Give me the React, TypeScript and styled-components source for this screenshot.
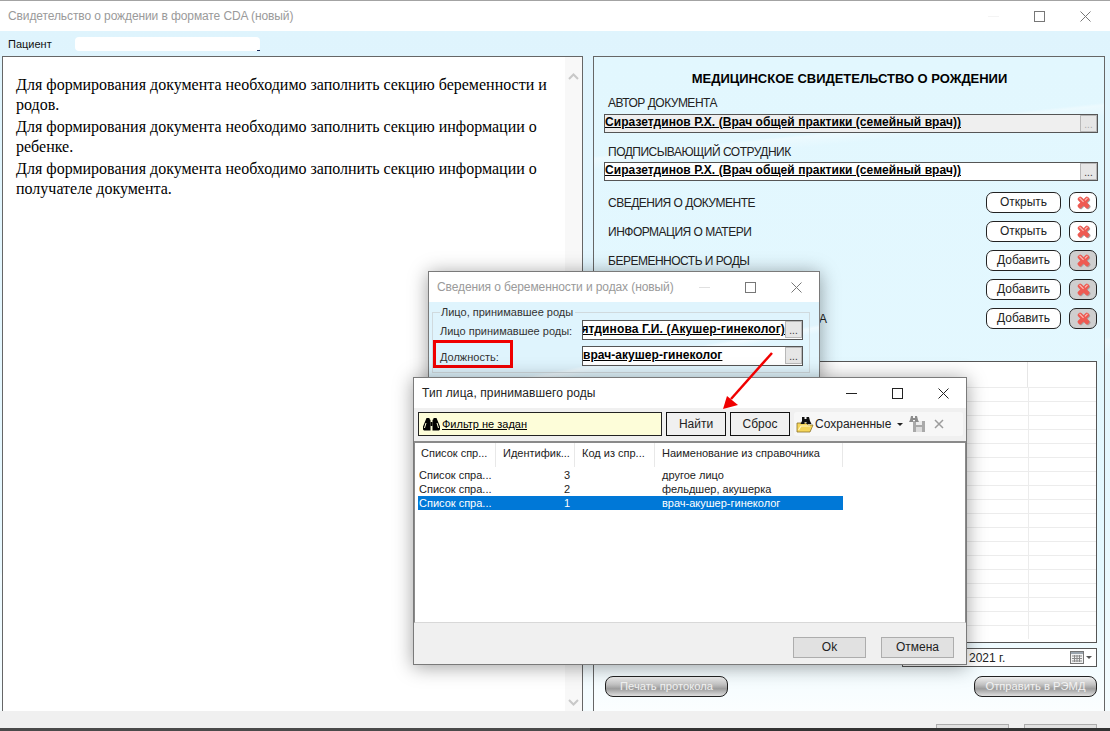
import styled, { createGlobalStyle } from "styled-components";

const GlobalStyle = createGlobalStyle`
  html, body {
    margin: 0;
    padding: 0;
    background: #ffffff;
  }
  * {
    box-sizing: border-box;
  }
`;

const Page = styled.div`
  position: relative;
  width: 1110px;
  height: 731px;
  overflow: hidden;
  display: flex;
  flex-direction: column;
  font-family: "Liberation Sans", Arial, sans-serif;
  font-size: 12px;
  color: #111;
  border-top: 1px solid #a3a3a3;
`;

const TitleBar = styled.div<{ $right?: number }>`
  flex: none;
  height: 30px;
  padding: 0 ${(p) => p.$right ?? 0}px 0 8px;
  background: #ffffff;
  display: flex;
  align-items: center;
  justify-content: space-between;
`;

const TitleText = styled.span<{ $active?: boolean }>`
  color: ${(p) => (p.$active ? "#222" : "#9a9a9a")};
  font-size: 12px;
  letter-spacing: ${(p) => (p.$active ? 0.1 : -0.1)}px;
  white-space: nowrap;
`;

const WinControls = styled.div`
  flex: none;
  display: flex;
  height: 100%;
`;

const WinControl = styled.div`
  width: 46px;
  height: 100%;
  display: flex;
  align-items: center;
  justify-content: center;
`;

const Workspace = styled.div`
  flex: 1;
  min-height: 0;
  display: flex;
  flex-direction: column;
  background:
    linear-gradient(168deg, transparent 0 58%, rgba(255, 255, 255, 0.4) 58.4%, transparent 60%),
    linear-gradient(180deg, #dff4fd 0%, #e6f8ff 70%, #f7fdff 100%);
`;

const PatientRow = styled.div`
  flex: none;
  height: 25px;
  padding-left: 8px;
  display: flex;
  align-items: center;
  font-size: 11px;
  color: #111;
`;

const PatientName = styled.div`
  width: 185px;
  height: 14px;
  margin-left: 23px;
  background: #ffffff;
  border-radius: 4px;
`;

const PatientTail = styled.div`
  width: 3px;
  height: 1px;
  margin: 14px 0 0 -3px;
  background: #1a2a5a;
`;

const Panels = styled.div`
  flex: 1;
  min-height: 0;
  display: flex;
  gap: 10px;
  padding: 0 5px 0 2px;
`;

const LeftPanel = styled.div`
  width: 581px;
  display: flex;
  background: #ffffff;
  border: 1px solid #666;
  border-bottom: none;
`;

const Message = styled.div`
  flex: 1;
  padding: 18px 14px 0 13px;
  font-family: "Liberation Serif", "Times New Roman", serif;
  font-size: 16px;
  line-height: 20px;
  color: #000;
`;

const MessageLine = styled.p`
  margin: 0 0 2px;
`;

const Scrollbar = styled.div`
  flex: none;
  width: 17px;
  background: #f8f8f8;
  display: flex;
  flex-direction: column;
  justify-content: space-between;
  align-items: center;
  padding: 16px 0 5px;
`;

const RightPanel = styled.div`
  flex: 1;
  display: flex;
  flex-direction: column;
  padding: 0 6px 0 10px;
  border: 1px solid #666;
  border-bottom: none;
  background:
    linear-gradient(174deg, transparent 0 14%, rgba(255, 255, 255, 0.35) 14.4%, transparent 16%),
    linear-gradient(180deg, #e2f7fe 0%, #e4f8ff 80%, #fbfeff 100%);
`;

const DocTitle = styled.div`
  margin-top: 14px;
  text-align: center;
  font-size: 13px;
  line-height: 16px;
  font-weight: bold;
  letter-spacing: -0.03px;
  color: #000;
  padding-right: 3px;
`;

const SectionLabel = styled.div<{ $top: number }>`
  margin-top: ${(p) => p.$top}px;
  padding-left: 4px;
  font-size: 12px;
  letter-spacing: -0.5px;
  line-height: 14px;
  color: #222;
`;

const Field = styled.div<{ $muted?: boolean; $top?: number }>`
  height: 19px;
  margin-top: ${(p) => p.$top ?? 2}px;
  display: flex;
  justify-content: space-between;
  background: ${(p) => (p.$muted ? "#efefef" : "#ffffff")};
  border: 1px solid #555;
  overflow: hidden;
`;

const FieldValue = styled.span<{ $wide?: boolean }>`
  margin-top: 1px;
  font-size: 12px;
  letter-spacing: ${(p) => (p.$wide ? 0.12 : 0.05)}px;
  line-height: 13px;
  font-weight: bold;
  color: #000;
  text-decoration: underline;
  white-space: nowrap;
`;

const DotsButton = styled.div<{ $muted?: boolean }>`
  flex: none;
  width: 17px;
  height: 17px;
  background: #e6e6e6;
  border: 1px solid #b8b8b8;
  color: ${(p) => (p.$muted ? "#aaa" : "#333")};
  font-size: 10px;
  line-height: 17px;
  text-align: center;
`;

const SectionRows = styled.div`
  margin: 11px 1px 0 0;
  display: flex;
  flex-direction: column;
  gap: 8px;
`;

const SectionRow = styled.div`
  height: 21px;
  display: flex;
  align-items: center;
  gap: 8px;
`;

const RowLabel = styled.span`
  flex: 1;
  padding-left: 4px;
  font-size: 12px;
  letter-spacing: -0.5px;
  color: #222;
`;

const RoundButton = styled.div`
  width: 75px;
  height: 21px;
  background: #ffffff;
  border: 1px solid #222;
  border-radius: 7px;
  font-size: 12px;
  line-height: 19px;
  text-align: center;
  color: #222;
`;

const DeleteButton = styled.div<{ $disabled?: boolean }>`
  width: 28px;
  height: 21px;
  background: ${(p) => (p.$disabled ? "#cfcfcf" : "#ffffff")};
  border: 1px solid #222;
  border-radius: 7px;
  display: flex;
  align-items: center;
  justify-content: center;
`;

const DataTable = styled.div`
  margin: 32px 1px 0 0;
  height: 282px;
  background: #ffffff;
  border: 1px solid #555;
  overflow: hidden;
`;

const TableHeader = styled.div`
  height: 25px;
  display: grid;
  grid-template-columns: 1fr 68px;
`;

const TableHeaderCell = styled.div`
  border-right: 1px solid #e6e6e6;
  &:last-child {
    border-right: none;
  }
`;

const TableRow = styled.div`
  height: 14px;
  display: grid;
  grid-template-columns: 1fr 67px;
  border-top: 1px solid #ececec;
`;

const TableCell = styled.div`
  border-right: 1px solid #ececec;
  &:last-child {
    border-right: none;
  }
`;

const DateRow = styled.div`
  margin: 5px 1px 0 0;
  display: flex;
  justify-content: flex-end;
`;

const DateField = styled.div`
  width: 195px;
  height: 19px;
  padding: 0 4px 0 66px;
  background: #ffffff;
  border: 1px solid #555;
  display: flex;
  align-items: center;
  justify-content: space-between;
  font-size: 12px;
  color: #222;
`;

const DateIcons = styled.div`
  display: flex;
  align-items: center;
`;

const ActionRow = styled.div`
  margin: 9px 1px 0 0;
  display: flex;
  justify-content: space-between;
  padding-left: 1px;
`;

const GlossyButton = styled.div`
  width: 123px;
  height: 21px;
  border: 1px solid #222;
  border-radius: 8px;
  background: linear-gradient(180deg, #efefef 0%, #c2c2c2 40%, #9c9c9c 62%, #dedede 100%);
  color: #f2f2f2;
  font-size: 11.2px;
  line-height: 19px;
  text-align: center;
`;

const FooterBar = styled.div`
  flex: none;
  height: 17px;
  padding: 13px 13px 0 0;
  background: #f0f0f0;
  display: flex;
  justify-content: flex-end;
  gap: 15px;
  overflow: hidden;
`;

const FooterButton = styled.div`
  width: 73px;
  height: 21px;
  background: #e1e1e1;
  border: 1px solid #adadad;
`;

const TaskBar = styled.div`
  flex: none;
  height: 3px;
  background: linear-gradient(90deg, #4a4a4a 0 590px, #333 590px);
`;

const Dialog = styled.div<{ $x: number; $y: number; $w: number; $h: number }>`
  position: absolute;
  left: ${(p) => p.$x}px;
  top: ${(p) => p.$y}px;
  width: ${(p) => p.$w}px;
  height: ${(p) => p.$h}px;
  display: flex;
  flex-direction: column;
  background: #f0f0f0;
  border: 1px solid #7a7a7a;
  box-shadow: 0 2px 18px rgba(0, 0, 0, 0.38);
`;

const BirthBody = styled.div`
  flex: 1;
  padding: 4px 9px 0 3px;
  background: linear-gradient(170deg, #dff4fd 0 60%, #eefaff 62%, #e2f6fe 66%);
`;

const GroupBox = styled.fieldset`
  margin: 0;
  height: 67px;
  padding: 1px 6px 0 7px;
  border: 1px solid #d0dade;
  display: flex;
  flex-direction: column;
  gap: 6px;
`;

const GroupLegend = styled.legend`
  padding: 0 2px 0 1px;
  margin-left: 0;
  font-size: 11px;
  line-height: 13px;
  color: #333;
`;

const GroupRow = styled.div`
  height: 20px;
  display: flex;
  align-items: center;
  justify-content: space-between;
`;

const GroupLabel = styled.span`
  padding-top: 1px;
  font-size: 11px;
  color: #333;
  white-space: nowrap;
`;

const ClipField = styled.div`
  flex: none;
  width: 221px;
  height: 20px;
  display: flex;
  background: #ffffff;
  border: 1px solid #555;
  overflow: hidden;
`;

const ClipValue = styled.div<{ $end?: boolean }>`
  flex: 1;
  min-width: 0;
  overflow: hidden;
  display: flex;
  padding-top: 1px;
  justify-content: ${(p) => (p.$end ? "flex-end" : "flex-start")};
`;

const HighlightBox = styled.div`
  position: absolute;
  left: 4px;
  top: 68px;
  width: 80px;
  height: 28px;
  border: 3px solid #f00000;
`;

const Toolbar = styled.div`
  flex: none;
  height: 33px;
  padding: 4px 3px 0 4px;
  display: flex;
  gap: 4px;
`;

const FilterBox = styled.div`
  width: 244px;
  height: 24px;
  padding-left: 4px;
  background: #fdfdd9;
  border: 1px solid #222;
  display: flex;
  align-items: center;
  gap: 2px;
  font-size: 11px;
`;

const FilterLink = styled.span`
  color: #000;
  text-decoration: underline;
`;

const FlatButton = styled.div`
  width: 60px;
  height: 24px;
  background: #f0f0f0;
  border: 1px solid #111;
  font-size: 12px;
  line-height: 22px;
  text-align: center;
  color: #222;
`;

const SavedBar = styled.div`
  flex: 1;
  height: 24px;
  padding-left: 2px;
  background: #f7f7f7;
  border-radius: 3px;
  display: flex;
  align-items: center;
  font-size: 12px;
  color: #222;
`;

const SavedLabel = styled.span`
  margin: 0 0 0 1px;
`;

const SaveSlot = styled.span`
  display: flex;
  margin-left: 6px;
`;

const ClearSlot = styled.span`
  display: flex;
  margin-left: 8px;
`;

const Caret = styled.span<{ $ml: number; $color?: string }>`
  width: 0;
  height: 0;
  margin-left: ${(p) => p.$ml}px;
  border-left: 3px solid transparent;
  border-right: 3px solid transparent;
  border-top: 3px solid ${(p) => p.$color ?? "#222"};
`;

const Grid = styled.div`
  flex: none;
  height: 182px;
  padding-left: 3px;
  background: #ffffff;
  border-top: 2px solid #8a8a8a;
  border-left: 1px solid #8a8a8a;
  border-right: 1px solid #8a8a8a;
  border-bottom: 1px solid #d8d8d8;
`;

const GridHeader = styled.div`
  width: 425px;
  height: 24px;
  display: grid;
  grid-template-columns: 78px 79px 80px 188px;
  margin-bottom: 1px;
`;

const GridHeadCell = styled.div<{ $first?: boolean }>`
  padding: 4px 0 0 ${(p) => (p.$first ? 3 : 7)}px;
  border-right: 1px solid #e8e8e8;
  font-size: 11px;
  color: #222;
  white-space: nowrap;
`;

const GridRow = styled.div<{ $selected?: boolean }>`
  width: 425px;
  height: 14px;
  display: grid;
  grid-template-columns: 78px 79px 80px 188px;
  background: ${(p) => (p.$selected ? "#0078d7" : "transparent")};
  color: ${(p) => (p.$selected ? "#ffffff" : "#222")};
  font-size: 11px;
  line-height: 14px;
`;

const GridCell = styled.div<{ $pad?: number; $right?: boolean }>`
  padding: ${(p) => (p.$right ? "0 5px 0 0" : `0 0 0 ${p.$pad ?? 1}px`)};
  text-align: ${(p) => (p.$right ? "right" : "left")};
  white-space: nowrap;
  overflow: hidden;
`;

const DialogFooter = styled.div`
  flex: 1;
  padding: 14px 12px 0 0;
  display: flex;
  justify-content: flex-end;
  gap: 15px;
`;

const DialogButton = styled.div`
  width: 73px;
  height: 21px;
  background: #e1e1e1;
  border: 1px solid #adadad;
  font-size: 12px;
  line-height: 19px;
  text-align: center;
  color: #222;
`;

const ArrowOverlay = styled.svg`
  position: absolute;
  left: 715px;
  top: 345px;
  overflow: visible;
`;

const Minimize = ({ color }: { color: string }) => (
  <svg width="11" height="11" viewBox="0 0 11 11">
    <path d="M0 5.500h11" stroke={color} strokeWidth="1" />
  </svg>
);

const Maximize = ({ color }: { color: string }) => (
  <svg width="11" height="11" viewBox="0 0 11 11">
    <rect x="0.5" y="0.5" width="10" height="10" fill="none" stroke={color} />
  </svg>
);

const Close = ({ color }: { color: string }) => (
  <svg width="11" height="11" viewBox="0 0 11 11">
    <path d="M0.5 0.5l10 10M10.500 0.5l-10 10" stroke={color} strokeWidth="1" fill="none" />
  </svg>
);

const Controls = ({ min, color }: { min: string; color: string }) => (
  <WinControls>
    <WinControl>
      <Minimize color={min} />
    </WinControl>
    <WinControl>
      <Maximize color={color} />
    </WinControl>
    <WinControl>
      <Close color={color} />
    </WinControl>
  </WinControls>
);

const Chevron = ({ up }: { up?: boolean }) => (
  <svg width="11" height="7" viewBox="0 0 11 7">
    <path d={up ? "M1 6l4.500-4.500L10 6" : "M1 1l4.500 4.500L10 1"} stroke="#c8c8c8" strokeWidth="2" fill="none" />
  </svg>
);

const RedCross = () => (
  <svg width="17" height="17" viewBox="0 0 17 17">
    <g transform="translate(1 1)" fill="#a8a2a2">
      <rect x="1.500" y="6" width="14" height="4.500" rx="1.500" transform="rotate(45 8.500 8.500)" />
      <rect x="1.500" y="6" width="14" height="4.500" rx="1.500" transform="rotate(-45 8.500 8.500)" />
    </g>
    <g fill="#ee5a52">
      <rect x="1.500" y="6.200" width="14" height="4.500" rx="1.500" transform="rotate(45 8.500 8.500)" />
      <rect x="1.500" y="6.200" width="14" height="4.500" rx="1.500" transform="rotate(-45 8.500 8.500)" />
    </g>
    <path d="M4.500 3.800l4 4M12.500 3.800l-2.500 2.500" stroke="#ffc2bc" strokeWidth="1.100" />
  </svg>
);

const Binoculars = () => (
  <svg width="17" height="15" viewBox="0 0 17 15">
    <path d="M3.500 1h3v1l1 1v10.500H1L0 12.500v-3z" fill="#000" />
    <path d="M13.500 1h-3v1l-1 1v10.500H16l1-1v-3z" fill="#000" />
    <rect x="7.500" y="5" width="2" height="4" fill="#000" />
    <path d="M3 6L1.500 11M14 6l1.500 5" stroke="#fdfdd9" strokeWidth="1" />
  </svg>
);

const FolderIcon = () => (
  <svg width="18" height="17" viewBox="0 0 18 17">
    <path d="M1 7h9l2 2h5l-3 7H1z" fill="#f6d65a" stroke="#8a7228" strokeWidth="0.8" />
    <path d="M2.500 14l2.500-4h9" stroke="#fff6c4" strokeWidth="1.200" fill="none" />
    <path d="M6 1h2.500v2h2V1H13l1 4 1.500 3h-5V6h-2v2H4.500L6 5z" fill="#111" />
  </svg>
);

const SaveIcon = () => (
  <svg width="17" height="18" viewBox="0 0 17 18">
    <rect x="4" y="6" width="12" height="11" fill="#a9a9a9" />
    <rect x="7" y="6" width="6" height="4" fill="#ececec" />
    <rect x="7" y="12" width="6" height="5" fill="#dcdcdc" />
    <path d="M2 1h2v2h2V1h2l1 4 1 2H6V5H4v2H0l1-2z" fill="#8c8c8c" />
  </svg>
);

const ClearIcon = () => (
  <svg width="10" height="10" viewBox="0 0 10 10">
    <path d="M1 1l8 8M9 1l-8 8" stroke="#9c9c9c" strokeWidth="1.500" fill="none" />
  </svg>
);

const CalendarIcon = () => (
  <svg width="14" height="13" viewBox="0 0 14 13">
    <rect x="0.5" y="0.5" width="13" height="12" fill="#f2f2f2" stroke="#777" />
    <rect x="1" y="1" width="12" height="2" fill="#9aa4ad" />
    <path d="M2 5h10M2 7.500h10M2 10h10M4.500 4v7M7 4v7M9.500 4v7" stroke="#8a8a8a" strokeWidth="1" />
  </svg>
);

const sections = [
  { name: "СВЕДЕНИЯ О ДОКУМЕНТЕ", action: "Открыть", filled: true },
  { name: "ИНФОРМАЦИЯ О МАТЕРИ", action: "Открыть", filled: true },
  { name: "БЕРЕМЕННОСТЬ И РОДЫ", action: "Добавить", filled: false },
  { name: "ИНФОРМАЦИЯ О РЕБЕНКЕ", action: "Добавить", filled: false },
  { name: "ДАННЫЕ О ПОЛУЧАТЕЛЯХ ДОКУМЕНТА", action: "Добавить", filled: false },
];

const gridRows = [
  { id: "3", name: "другое лицо", selected: false },
  { id: "2", name: "фельдшер, акушерка", selected: false },
  { id: "1", name: "врач-акушер-гинеколог", selected: true },
];

const author = "Сиразетдинов Р.Х. (Врач общей практики (семейный врач))";

export default function App() {
  return (
    <>
      <GlobalStyle />
      <Page>
        <TitleBar $right={2}>
          <TitleText>Свидетельство о рождении в формате CDA (новый)</TitleText>
          <Controls min="#f4f4f4" color="#777" />
        </TitleBar>
        <Workspace>
          <PatientRow>
            Пациент
            <PatientName />
            <PatientTail />
          </PatientRow>
          <Panels>
            <LeftPanel>
              <Message>
                <MessageLine>Для формирования документа необходимо заполнить секцию беременности и родов.</MessageLine>
                <MessageLine>Для формирования документа необходимо заполнить секцию информации о ребенке.</MessageLine>
                <MessageLine>Для формирования документа необходимо заполнить секцию информации о получателе документа.</MessageLine>
              </Message>
              <Scrollbar>
                <Chevron up />
                <Chevron />
              </Scrollbar>
            </LeftPanel>
            <RightPanel>
              <DocTitle>МЕДИЦИНСКОЕ СВИДЕТЕЛЬСТВО О РОЖДЕНИИ</DocTitle>
              <SectionLabel $top={9}>АВТОР ДОКУМЕНТА</SectionLabel>
              <Field $muted $top={4}>
                <FieldValue>{author}</FieldValue>
                <DotsButton $muted>...</DotsButton>
              </Field>
              <SectionLabel $top={12}>ПОДПИСЫВАЮЩИЙ СОТРУДНИК</SectionLabel>
              <Field $top={3}>
                <FieldValue>{author}</FieldValue>
                <DotsButton>...</DotsButton>
              </Field>
              <SectionRows>
                {sections.map((s) => (
                  <SectionRow key={s.name}>
                    <RowLabel>{s.name}</RowLabel>
                    <RoundButton>{s.action}</RoundButton>
                    <DeleteButton $disabled={!s.filled}>
                      <RedCross />
                    </DeleteButton>
                  </SectionRow>
                ))}
              </SectionRows>
              <DataTable>
                <TableHeader>
                  <TableHeaderCell />
                  <TableHeaderCell />
                </TableHeader>
                {Array.from({ length: 18 }, (_, i) => (
                  <TableRow key={i}>
                    <TableCell />
                    <TableCell />
                  </TableRow>
                ))}
              </DataTable>
              <DateRow>
                <DateField>
                  2021 г.
                  <DateIcons>
                    <CalendarIcon />
                    <Caret $ml={2} $color="#555" />
                  </DateIcons>
                </DateField>
              </DateRow>
              <ActionRow>
                <GlossyButton>Печать протокола</GlossyButton>
                <GlossyButton>Отправить в РЭМД</GlossyButton>
              </ActionRow>
            </RightPanel>
          </Panels>
          <FooterBar>
            <FooterButton />
            <FooterButton />
          </FooterBar>
        </Workspace>
        <TaskBar />

        <Dialog $x={428} $y={270} $w={392} $h={115}>
          <TitleBar>
            <TitleText>Сведения о беременности и родах (новый)</TitleText>
            <Controls min="#e0e0e0" color="#777" />
          </TitleBar>
          <BirthBody>
            <GroupBox>
              <GroupLegend>Лицо, принимавшее роды</GroupLegend>
              <GroupRow>
                <GroupLabel>Лицо принимавшее роды:</GroupLabel>
                <ClipField>
                  <ClipValue $end>
                    <FieldValue $wide>Гиниятдинова Г.И. (Акушер-гинеколог)</FieldValue>
                  </ClipValue>
                  <DotsButton>...</DotsButton>
                </ClipField>
              </GroupRow>
              <GroupRow>
                <GroupLabel>Должность:</GroupLabel>
                <ClipField>
                  <ClipValue>
                    <FieldValue>врач-акушер-гинеколог</FieldValue>
                  </ClipValue>
                  <DotsButton>...</DotsButton>
                </ClipField>
              </GroupRow>
            </GroupBox>
          </BirthBody>
          <HighlightBox />
        </Dialog>

        <Dialog $x={413} $y={376} $w={554} $h={288}>
          <TitleBar>
            <TitleText $active>Тип лица, принимавшего роды</TitleText>
            <Controls min="#222" color="#222" />
          </TitleBar>
          <Toolbar>
            <FilterBox>
              <Binoculars />
              <FilterLink>Фильтр не задан</FilterLink>
            </FilterBox>
            <FlatButton>Найти</FlatButton>
            <FlatButton>Сброс</FlatButton>
            <SavedBar>
              <FolderIcon />
              <SavedLabel>Сохраненные</SavedLabel>
              <Caret $ml={6} />
              <SaveSlot>
                <SaveIcon />
              </SaveSlot>
              <ClearSlot>
                <ClearIcon />
              </ClearSlot>
            </SavedBar>
          </Toolbar>
          <Grid>
            <GridHeader>
              <GridHeadCell $first>Список спр...</GridHeadCell>
              <GridHeadCell>Идентифик...</GridHeadCell>
              <GridHeadCell>Код из спр...</GridHeadCell>
              <GridHeadCell>Наименование из справочника</GridHeadCell>
            </GridHeader>
            {gridRows.map((r) => (
              <GridRow key={r.id} $selected={r.selected}>
                <GridCell>Список спра...</GridCell>
                <GridCell $right>{r.id}</GridCell>
                <GridCell />
                <GridCell $pad={7}>{r.name}</GridCell>
              </GridRow>
            ))}
          </Grid>
          <DialogFooter>
            <DialogButton>Ok</DialogButton>
            <DialogButton>Отмена</DialogButton>
          </DialogFooter>
        </Dialog>

        <ArrowOverlay width="70" height="70" viewBox="0 0 70 70">
          <path d="M57 7L16 53" stroke="#f00000" strokeWidth="2.500" />
          <path d="M8 63l4-13 11 9z" fill="#f00000" />
        </ArrowOverlay>
      </Page>
    </>
  );
}
